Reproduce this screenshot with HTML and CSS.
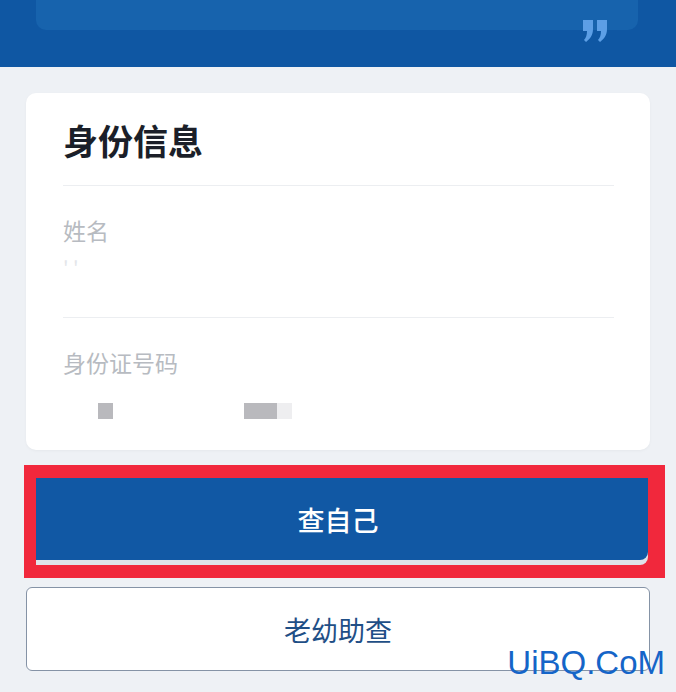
FILE: index.html
```html
<!DOCTYPE html>
<html lang="zh-CN">
<head>
  <meta charset="UTF-8">
  <meta name="viewport" content="width=device-width, initial-scale=1.0">
  <title>身份信息</title>
  <link rel="stylesheet" href="styles.css">
</head>
<body>
  <!-- 顶部蓝色区域 -->
  <div class="top">
    <div class="top-card"></div>
    <svg class="quote" width="24" height="22" viewBox="0 0 24 22">
      <path d="M0 0H10V9C10 15 7 19 3 22L1 20C3 18 4 15 4 11H0Z" />
      <path d="M14 0H24V9C24 15 21 19 17 22L15 20C17 18 18 15 18 11H14Z" />
    </svg>
  </div>

  <!-- 身份信息卡片 -->
  <div class="card">
    <h2 class="card-title">身份信息</h2>
    <div class="field">
      <div class="label">姓名</div>
      <div class="value"><span class="blur">' '</span></div>
    </div>
    <div class="field last">
      <div class="label">身份证号码</div>
      <div class="value id">
        <i class="mask m1"></i>
        <i class="mask m2"></i>
        <i class="mask m3"></i>
      </div>
    </div>
  </div>

  <!-- 按钮 -->
  <div class="mark">
    <a class="btn primary" href="#">查自己</a>
  </div>
  <a class="btn plain" href="#">老幼助查</a>

  <div class="watermark">UiBQ.CoM</div>
</body>
</html>
```

FILE: styles.css
```css
* {
  margin: 0;
  padding: 0;
  box-sizing: border-box;
}
body {
  width: 676px;
  height: 692px;
  overflow: hidden;
  position: relative;
  background: #eef1f5;
  font-family: "Noto Sans CJK SC", "Noto Sans", sans-serif;
}
a {
  text-decoration: none;
}
.top {
  position: relative;
  height: 67px;
  background: #0f57a3;
  padding: 0 38px 0 36px;
}
.top-card {
  height: 30px;
  background: #1763ad;
  border-radius: 0 0 10px 10px;
}
.quote {
  position: absolute;
  right: 69px;
  top: 20px;
  fill: #5d9fe6;
}
.card {
  margin: 26px 26px 0;
  height: 357px;
  background: #fff;
  border-radius: 10px;
  padding: 0 36px 0 37px;
  box-shadow: 0 1px 3px rgba(0, 0, 0, .04);
}
.card-title {
  height: 93px;
  padding-top: 23px;
  font-size: 35px;
  line-height: 48px;
  font-weight: bold;
  color: #1b1f29;
  border-bottom: 1px solid #eceef1;
}
.field {
  height: 132px;
  padding-top: 27px;
  border-bottom: 1px solid #eceef1;
}
.field.last {
  border-bottom: 0;
}
.label {
  font-size: 23px;
  line-height: 34px;
  color: #b7bbc1;
}
.value {
  height: 40px;
  padding-top: 8px;
  font-size: 20px;
  color: #e4e6ea;
}
.value.id {
  display: flex;
  align-items: flex-end;
  padding-top: 20px;
}
.mask {
  display: block;
  height: 16px;
  background: #b9b9bd;
}
.m1 {
  width: 15px;
  margin-left: 35px;
}
.m2 {
  width: 33px;
  margin-left: 131px;
}
.m3 {
  width: 15px;
  background: #eeeef0;
}
.mark {
  margin: 15px 11px 0 24px;
  background: #f1283c;
  padding: 13px 17px 18px 12px;
}
.btn {
  display: flex;
  align-items: center;
  justify-content: center;
  font-size: 27px;
}
.primary {
  height: 82px;
  padding-right: 8px;
  background: #1158a4;
  color: #fff;
  font-weight: 500;
  border-radius: 0 0 8px 0;
  box-shadow: 0 5px 0 #dfe3ea;
}
.plain {
  margin: 9px 26px 0;
  height: 84px;
  background: #fff;
  border: 1px solid #8593a6;
  border-radius: 6px;
  color: #1f4f86;
}
.watermark {
  position: absolute;
  right: 11px;
  top: 644px;
  font-family: "Liberation Sans", sans-serif;
  font-size: 33px;
  color: #1565c8;
}
```
